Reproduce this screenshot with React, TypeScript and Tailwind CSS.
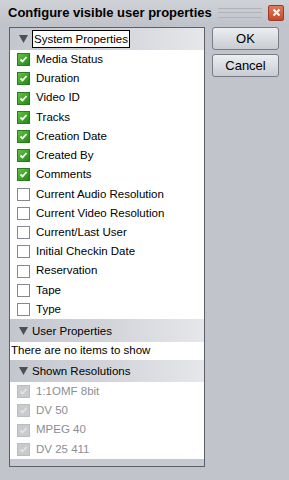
import React from 'react';

const systemProps: { label: string; checked: boolean }[] = [
  { label: 'Media Status', checked: true },
  { label: 'Duration', checked: true },
  { label: 'Video ID', checked: true },
  { label: 'Tracks', checked: true },
  { label: 'Creation Date', checked: true },
  { label: 'Created By', checked: true },
  { label: 'Comments', checked: true },
  { label: 'Current Audio Resolution', checked: false },
  { label: 'Current Video Resolution', checked: false },
  { label: 'Current/Last User', checked: false },
  { label: 'Initial Checkin Date', checked: false },
  { label: 'Reservation', checked: false },
  { label: 'Tape', checked: false },
  { label: 'Type', checked: false },
];

const resolutions = ['1:1OMF 8bit', 'DV 50', 'MPEG 40', 'DV 25 411'];

const Check = ({ state }: { state: 'on' | 'off' | 'disabled' }) => {
  if (state === 'off') {
    return <div className="w-[13px] h-[13px] border border-[#85888f] bg-white shrink-0" />;
  }
  const on = state === 'on';
  return (
    <div
      className={
        on
          ? 'w-[13px] h-[13px] shrink-0 flex items-center justify-center bg-gradient-to-br from-[#62c442] to-[#1d8a12] border border-[#2f7a22]'
          : 'w-[13px] h-[13px] shrink-0 flex items-center justify-center bg-[#c8cace] border border-[#babcc0]'
      }
    >
      <svg width="9" height="9" viewBox="0 0 9 9">
        <path d="M1.5 4.5 L3.5 6.5 L7.5 2" fill="none" stroke={on ? '#ffffff' : '#e2e3e6'} strokeWidth="1.8" />
      </svg>
    </div>
  );
};

const Header = ({ label, focused, h }: { label: string; focused?: boolean; h: string }) => (
  <div className={`${h} flex items-center pl-[9px] gap-[4px] bg-gradient-to-r from-[#c4c7ce] via-[#d2d4da] to-[#e6e7ea]`}>
    <svg width="9" height="8" viewBox="0 0 9 8" className="shrink-0">
      <path d="M0 0 H9 L4.5 8 Z" fill="#4e5055" />
    </svg>
    <span className={focused ? 'border border-black px-[1px] leading-[16px] bg-white' : 'leading-[16px]'}>{label}</span>
  </div>
);

export default function App() {
  return (
    <div
      className="w-[289px] h-[480px] bg-[#c1c4cb] text-[11.5px] text-black flex flex-col overflow-hidden"
      style={{ fontFamily: '"Liberation Sans", Arial, sans-serif' }}
    >
      <div className="h-[26px] shrink-0 flex items-center pl-[8px] pr-[5px] pb-[1px] bg-gradient-to-b from-[#cfd2d7] to-[#bfc2c8]">
        <span className="font-bold text-[13px]">Configure visible user properties</span>
        <div className="flex-1 mx-[6px] h-[10px] flex flex-col justify-between">
          <div className="h-px bg-[#b0b3b9]" />
          <div className="h-px bg-[#b0b3b9]" />
          <div className="h-px bg-[#b0b3b9]" />
        </div>
        <div className="w-[16px] h-[16px] rounded-[2px] bg-gradient-to-b from-[#e3795a] to-[#c3492c] border border-[#9c3a24] flex items-center justify-center">
          <svg width="9" height="9" viewBox="0 0 9 9">
            <path d="M1.5 1.5 L7.5 7.5 M7.5 1.5 L1.5 7.5" stroke="#fff" strokeWidth="2" />
          </svg>
        </div>
      </div>

      <div className="flex-1 flex pl-[9px] pr-[10px] pt-[1px] pb-[13px] gap-[7px]">
        <div className="w-[197px] border border-[#5c5f66] bg-[#c6c9d0] flex flex-col">
          <div className="bg-white flex flex-col">
            <Header label="System Properties" focused h="h-[22px]" />
            {systemProps.map((p) => (
              <div key={p.label} className="h-[19.23px] flex items-center pl-[7px] gap-[6px]">
                <Check state={p.checked ? 'on' : 'off'} />
                <span>{p.label}</span>
              </div>
            ))}
            <Header label="User Properties" h="h-[23px]" />
            <div className="h-[18px] flex items-center pl-[1px]">There are no items to show</div>
            <Header label="Shown Resolutions" h="h-[22px]" />
            {resolutions.map((r) => (
              <div key={r} className="h-[19.23px] flex items-center pl-[7px] gap-[6px] text-[#8b8e94]">
                <Check state="disabled" />
                <span>{r}</span>
              </div>
            ))}
          </div>
        </div>

        <div className="flex flex-col gap-[4px]">
          <button className="w-[67px] h-[23px] rounded-[3px] border border-[#7a7d84] bg-gradient-to-b from-[#eceef1] to-[#c9ccd2] text-[13px]">
            OK
          </button>
          <button className="w-[67px] h-[23px] rounded-[3px] border border-[#7a7d84] bg-gradient-to-b from-[#eceef1] to-[#c9ccd2] text-[13px]">
            Cancel
          </button>
        </div>
      </div>
    </div>
  );
}
